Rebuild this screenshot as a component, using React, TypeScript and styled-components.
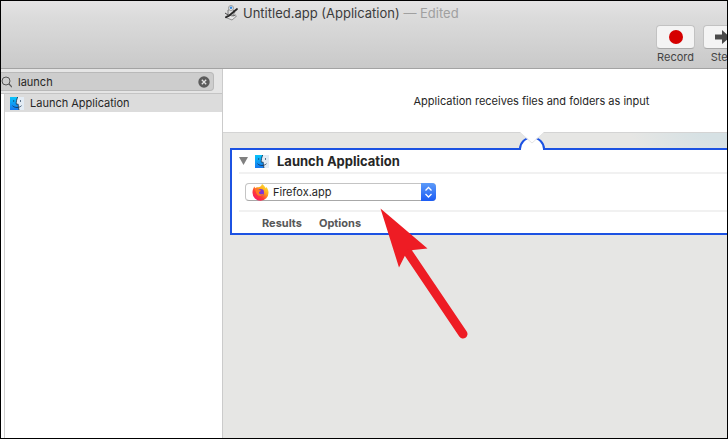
import React, { useState } from "react";
import styled, { createGlobalStyle } from "styled-components";

const GlobalStyle = createGlobalStyle`
  *, *::before, *::after { box-sizing: border-box; }
  body { margin: 0; }
  button, input, select { font: inherit; color: inherit; margin: 0; }
`;

const Window = styled.div`
  display: flex;
  flex-direction: column;
  min-height: 100vh;
  overflow: hidden;
  position: relative;
  border: 1px solid #000;
  background: #fff;
  color: #262626;
  font: 11px/16px Inter, "Liberation Sans", sans-serif;
`;

const Header = styled.header`
  flex: none;
  padding-top: 4px;
  height: 68px;
  background: linear-gradient(#e4e3e4, #dbdbdb 25%, #c9c9c9);
  border-bottom: 1px solid #a3a3a3;
`;

const TitleBar = styled.div`
  display: flex;
  align-items: center;
  gap: 4px;
  height: 16px;
  padding-left: 222px;
`;

const Title = styled.h1`
  margin: 0;
  font-size: 13px;
  line-height: 16px;
  font-weight: 400;
  color: #3c3c3c;
  white-space: nowrap;
`;

const Edited = styled.span`
  font-weight: 400;
  color: #a0a0a0;
`;

const Toolbar = styled.div`
  display: flex;
  justify-content: flex-end;
  gap: 8px;
  margin: 4px -15px 0 0;
`;

const Tool = styled.label`
  display: flex;
  flex-direction: column;
  align-items: center;
  width: 39px;
  color: #444;
`;

const ToolButton = styled.button`
  display: flex;
  align-items: center;
  justify-content: center;
  width: 39px;
  height: 24px;
  padding: 0;
  border: 1px solid #c2c2c2;
  border-bottom-color: #aaa;
  border-radius: 4px;
  background: #f4f4f4;
`;

const Body = styled.div`
  flex: 1;
  display: flex;
`;

const Sidebar = styled.aside`
  flex: none;
  width: 222px;
  display: flex;
  flex-direction: column;
  border-right: 1px solid #cbcbcb;
`;

const SearchBar = styled.div`
  height: 25px;
  padding: 3px 8px 3px 0;
  background: #e5e5e5;
  border-bottom: 1px solid #c4c4c4;
`;

const SearchField = styled.div`
  display: flex;
  align-items: center;
  gap: 6px;
  height: 19px;
  padding: 0 3px 0 0;
  border: 1px solid #b9b9b9;
  border-left: 0;
  border-radius: 0 4px 4px 0;
  background: #cdcdcd;
`;

const SearchInput = styled.input`
  flex: 1;
  min-width: 0;
  padding: 0;
  border: 0;
  outline: 0;
  background: transparent;
`;

const ClearButton = styled.button`
  display: flex;
  padding: 0;
  border: 0;
  background: none;
`;

const Results = styled.ul`
  flex: 1;
  margin: 0 0 0 3px;
  padding: 0;
  list-style: none;
  border-left: 1px solid #cfcfcf;
`;

const Result = styled.li`
  display: flex;
  align-items: center;
  gap: 6px;
  height: 18px;
  padding-left: 5px;
  background: #dcdcdc;
`;

const Workflow = styled.main`
  flex: 1;
  min-width: 0;
  overflow: hidden;
  background:
    radial-gradient(ellipse 100px 60px at 100% 50px, #d6e1e4 35%, #d6e1e400),
    #e6e6e4;
`;

const Canvas = styled.div`
  margin-right: -113px;
`;

const InputNote = styled.div`
  height: 64px;
  padding-top: 24px;
  text-align: center;
  background: #fff;
  border-bottom: 1px solid #d4d4d4;
`;

const Action = styled.section`
  position: relative;
  margin: 15px 7px 0;
  padding: 0 7px;
  border: 2px solid #1c52e2;
  background: #fff;
`;

const Connector = styled.svg`
  position: absolute;
  left: 50%;
  top: -19px;
  margin-left: -14px;
`;

const ActionHeader = styled.div`
  display: flex;
  align-items: center;
  height: 22px;
`;

const Disclosure = styled.button`
  display: flex;
  margin-right: 7px;
  padding: 0;
  border: 0;
  background: none;
`;

const ActionTitle = styled.h2`
  margin: 0 0 0 8px;
  font-size: 13px;
  line-height: 16px;
  font-weight: 700;
`;

const ActionBody = styled.div`
  display: flex;
  align-items: center;
  height: 38px;
  padding-left: 6px;
  border-top: 2px solid #f1f1f1;
`;

const Popup = styled.div`
  display: grid;
  width: 191px;
  height: 18px;
  align-items: center;
  & > * { grid-area: 1 / 1; }
  & > svg { pointer-events: none; z-index: 1; }
`;

const AppIcon = styled.svg`
  margin-left: 7px;
`;

const Stepper = styled.svg`
  justify-self: end;
`;

const Select = styled.select`
  appearance: none;
  width: 100%;
  height: 18px;
  padding: 0 20px 0 27px;
  border: 1px solid #c4c4c4;
  border-bottom-color: #a8a8a8;
  border-radius: 4px;
  background: #fff;
  line-height: 16px;
`;

const ActionFooter = styled.div`
  display: flex;
  gap: 17px;
  height: 23px;
  align-items: center;
  padding: 0 0 0 23px;
  border-top: 2px solid #f1f1f1;
`;

const FooterButton = styled.button`
  padding: 0;
  border: 0;
  background: none;
  font-size: 11px;
  line-height: 16px;
  font-weight: 700;
  color: #575757;
`;

const Pointer = styled.svg`
  position: absolute;
  left: 379px;
  top: 207px;
  pointer-events: none;
`;

const FinderIcon = () => (
  <svg width="14" height="13" viewBox="0 0 14 13" aria-hidden="true">
    <defs>
      <linearGradient id="finder" x2="0" y2="1">
        <stop stopColor="#08c4fa" />
        <stop offset="1" stopColor="#1678ef" />
      </linearGradient>
    </defs>
    <path d="M0 0h14v13H0z" fill="#e3ecf5" />
    <path d="M0 0h8C6.7 2.500 6.200 4.500 6.200 7.200h2c0 2.300.2 4 .8 5.800H0z" fill="url(#finder)" />
    <path
      d="M7.700 0C6.600 2.500 6.200 4.500 6.200 7.200h2c0 2.300.2 4 .8 5.800M3.700 3.200v1.600M10.500 3.200v1.600M2.500 8.700c2.500 2.400 6.500 2.400 9 0"
      fill="none"
      stroke="#12304f"
      strokeWidth=".8"
    />
  </svg>
);

const AutomatorIcon = () => (
  <svg width="16" height="16" viewBox="0 0 16 16" aria-hidden="true">
    <path d="M2 12.200 6.500 9l7 2.200L9 15z" fill="#e8e8e8" stroke="#888" strokeWidth=".9" />
    <path d="M5 5 9 4l3 3-3 4-4-1.500z" fill="#ddd" stroke="#666" strokeWidth=".8" />
    <circle cx="8" cy="3" r="2.500" fill="#eee" stroke="#888" strokeWidth=".8" />
    <circle cx="8" cy="2.800" r="1.300" fill="#378be0" />
    <path d="m3 12.300 3-1.600L14 4" fill="none" stroke="#252525" strokeWidth="1.700" strokeLinecap="round" />
    <path d="m2 8 3 2M10 11.500l2-2" stroke="#444" />
  </svg>
);

const FirefoxIcon = () => (
  <AppIcon width="17" height="17" viewBox="0 0 17 17" aria-hidden="true">
    <defs>
      <linearGradient id="fox" x1="1" x2="0.200" y2="1">
        <stop stopColor="#fff13d" />
        <stop offset=".4" stopColor="#ffad1c" />
        <stop offset=".7" stopColor="#ff3b36" />
        <stop offset="1" stopColor="#f5156c" />
      </linearGradient>
    </defs>
    <path
      d="M10 0c2 1.500 3.200 2.800 3.600 4.200l.7-1.200c1.500 1.700 2.200 3.500 2.200 5.500a8 8 0 0 1-16 .3C.500 6 1.300 4 2.400 2.500l.7 1.700C4 3.300 5 3 6.400 3.300 7.500 3 9.500 2.500 10 0z"
      fill="url(#fox)"
    />
    <circle cx="8.700" cy="8.400" r="3.300" fill="#7b37d8" />
    <path d="M3 5c1.500-.7 3-.5 4 .7l2 .7c-.2 1-1.500 1-2 1.600-.3 1 .5 2 1.600 2.200 1 .2 2-.6 2.700 0-1 2-4.300 2.300-6 .5C4 9.300 3.700 7 3 5z" fill="#ff7a25" />
  </AppIcon>
);

export default function App() {
  const [query, setQuery] = useState("launch");

  return (
    <>
      <GlobalStyle />
      <Window>
        <Header>
          <TitleBar>
            <AutomatorIcon />
            <Title>
              Untitled.app (Application) <Edited>— Edited</Edited>
            </Title>
          </TitleBar>
          <Toolbar>
            <Tool>
              <ToolButton type="button">
                <svg width="14" height="14" viewBox="0 0 14 14" aria-hidden="true">
                  <circle cx="7" cy="7" r="7" fill="#d50000" />
                </svg>
              </ToolButton>
              Record
            </Tool>
            <Tool>
              <ToolButton type="button">
                <svg width="16" height="14" viewBox="0 0 16 14" aria-hidden="true">
                  <path d="M0 4.500h7V0l8 7-8 7V9.500H0z" fill="#4a4a4a" />
                </svg>
              </ToolButton>
              Step
            </Tool>
          </Toolbar>
        </Header>
        <Body>
          <Sidebar>
            <SearchBar>
              <SearchField>
                <svg width="11" height="12" viewBox="0 0 11 12" fill="none" stroke="#555" aria-hidden="true">
                  <circle cx="5" cy="5" r="4" />
                  <path d="m8 8 3 3.200" strokeWidth="1.200" />
                </svg>
                <SearchInput
                  aria-label="Search actions"
                  value={query}
                  onChange={(e) => setQuery(e.target.value)}
                />
                <ClearButton type="button" aria-label="Clear search" onClick={() => setQuery("")}>
                  <svg width="12" height="12" viewBox="0 0 12 12" aria-hidden="true">
                    <circle cx="6" cy="6" r="5.700" fill="#5c5c5c" />
                    <path d="m3.800 3.800 4.400 4.400m0-4.400L3.800 8.200" stroke="#e4e4e4" strokeWidth="1.300" />
                  </svg>
                </ClearButton>
              </SearchField>
            </SearchBar>
            <Results>
              <Result>
                <FinderIcon />
                Launch Application
              </Result>
            </Results>
          </Sidebar>
          <Workflow>
            <Canvas>
              <InputNote>Application receives files and folders as input</InputNote>
              <Action>
                <Connector width="28" height="22" viewBox="0 0 28 22" aria-hidden="true">
                  <path d="M2 22v-3a12 14 0 0 1 24 0v3z" fill="#fff" />
                  <path d="M1 18h1C2 12 7 6.500 14 6.500S26 12 26 18h1" fill="none" stroke="#1c52e2" strokeWidth="2" />
                  <path d="M2 0v1l12 11L26 1V0z" fill="#fff" />
                  <path d="m2 1.500 12 10.500L26 1.500" fill="none" stroke="#e4e4e4" />
                </Connector>
                <ActionHeader>
                  <Disclosure type="button" aria-label="Collapse action">
                    <svg width="9" height="8" viewBox="0 0 9 8" aria-hidden="true">
                      <path d="M0 0h9L4.500 8z" fill="#808080" />
                    </svg>
                  </Disclosure>
                  <FinderIcon />
                  <ActionTitle>Launch Application</ActionTitle>
                </ActionHeader>
                <ActionBody>
                  <Popup>
                    <FirefoxIcon />
                    <Select aria-label="Application" defaultValue="Firefox.app">
                      <option>Firefox.app</option>
                    </Select>
                    <Stepper width="15" height="18" viewBox="0 0 15 18" aria-hidden="true">
                      <defs>
                        <linearGradient id="stepper" x2="0" y2="1">
                          <stop stopColor="#5c9bf9" />
                          <stop offset="1" stopColor="#1b5cf5" />
                        </linearGradient>
                      </defs>
                      <path d="M0 0h11a4 4 0 0 1 4 4v10a4 4 0 0 1-4 4H0z" fill="url(#stepper)" />
                      <path d="m4.500 7.500 3-3 3 3m-6 3.500 3 3 3-3" fill="none" stroke="#fff" strokeWidth="1.300" />
                    </Stepper>
                  </Popup>
                </ActionBody>
                <ActionFooter>
                  <FooterButton type="button">Results</FooterButton>
                  <FooterButton type="button">Options</FooterButton>
                </ActionFooter>
              </Action>
            </Canvas>
          </Workflow>
        </Body>
        <Pointer width="92" height="134" viewBox="0 0 92 134" aria-hidden="true">
          <path d="M.500.500 47.500 40.500 33 42 25.500 46.500 19 59.500z" fill="#ee1c24" />
          <path d="M29 46 83 126" stroke="#ee1c24" strokeWidth="9" strokeLinecap="round" />
        </Pointer>
      </Window>
    </>
  );
}
